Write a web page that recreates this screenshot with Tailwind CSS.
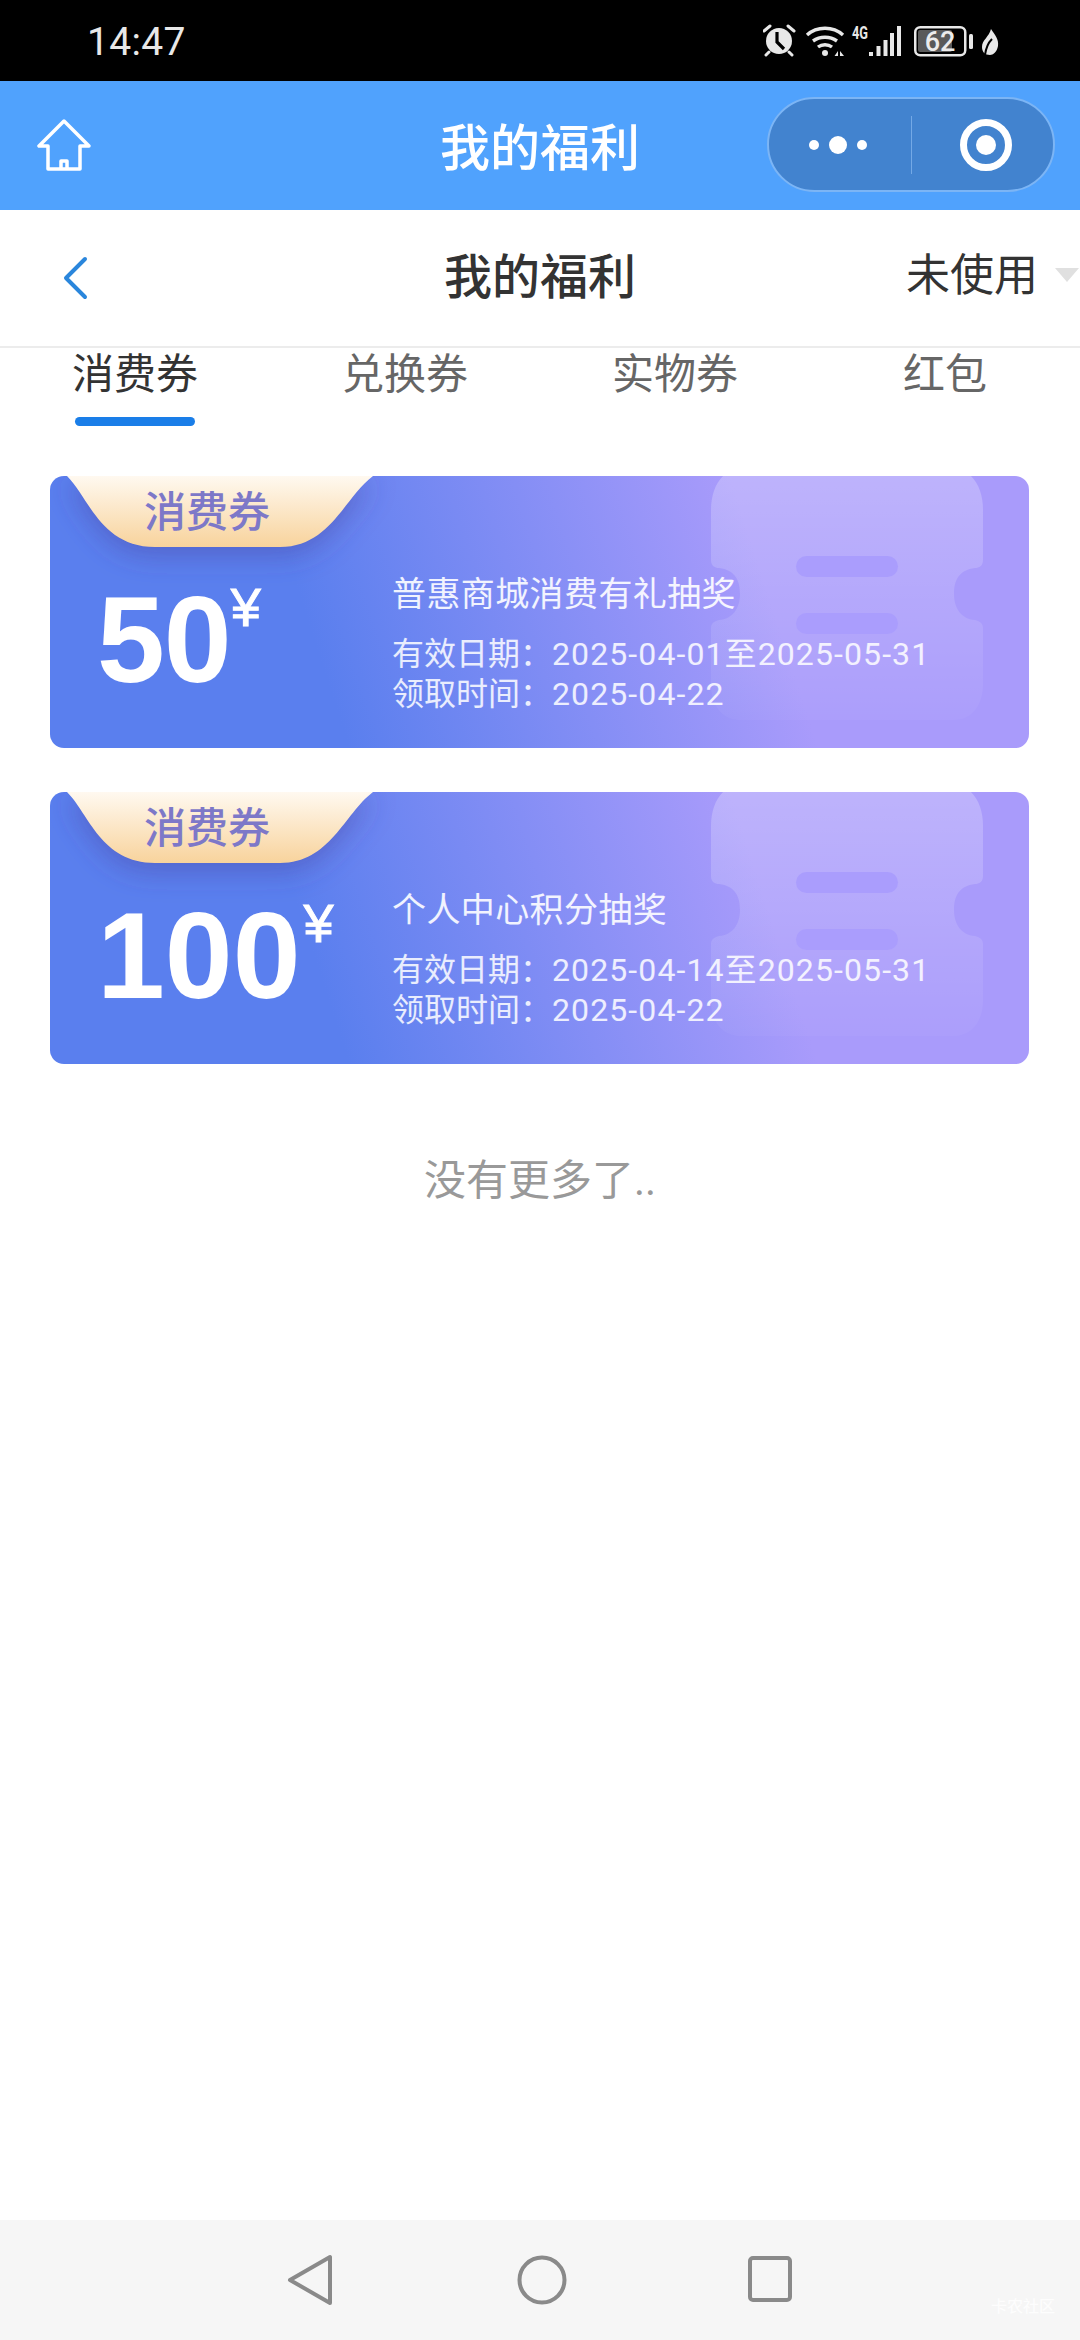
<!DOCTYPE html>
<html lang="zh">
<head>
<meta charset="UTF-8">
<title>我的福利</title>
<script src="https://cdn.jsdelivr.net/npm/@tailwindcss/browser@4"></script>
</head>
<body class="bg-white font-['Roboto','Noto_Sans_CJK_SC',sans-serif]">
<div class="flex h-[2340px] w-[1080px] flex-col overflow-hidden">

  <!-- status bar -->
  <div class="flex h-[81px] items-center justify-between bg-black pl-[87px] pr-[81px] text-[#e8e8e8]">
    <span class="mt-[3px] text-[39px] leading-none tracking-[0.3px]">14:47</span>
    <svg width="236" height="40" viewBox="0 0 236 40" fill="none">
      <!-- alarm -->
      <circle cx="16" cy="20" r="13" fill="#e8e8e8"/>
      <path d="M14 11v10l7 7" stroke="#000" stroke-width="3.2"/>
      <path d="M1 10l6-5M31 10l-6-5M6 31l-3 3M26 31l3 3" stroke="#e8e8e8" stroke-width="3" stroke-linecap="round"/>
      <!-- wifi -->
      <path d="M44 14c10-9 26-9 36 0M50 20c7-5 17-5 24 0M55 26c4-3 10-3 14 0" stroke="#e8e8e8" stroke-width="3.4"/>
      <circle cx="62" cy="32" r="3" fill="#e8e8e8"/>
      <path d="M75 35h-3.5l3.500-5zM77 30l4 5h-4z" fill="#e8e8e8"/>
      <!-- 4G and signal -->
      <text x="89" y="18" fill="#e8e8e8" font-size="18" font-weight="700" font-family="Roboto" textLength="16" lengthAdjust="spacingAndGlyphs">4G</text>
      <path d="M106 31h4v4h-4zM113.500 25h4v10h-4zM120.500 19h4v16h-4zM127 12h4v23h-4zM134 5h4v30h-4z" fill="#e8e8e8"/>
      <!-- battery -->
      <rect x="152.250" y="6.250" width="50" height="28" rx="5" stroke="#e8e8e8" stroke-width="2.500"/>
      <rect x="155" y="9" width="34" height="22" rx="2" fill="#5a5a5a"/>
      <text x="177" y="29.500" text-anchor="middle" fill="#ececec" font-size="27" font-weight="500" font-family="Roboto">62</text>
      <rect x="206" y="13" width="4" height="15" rx="1.500" fill="#e8e8e8"/>
      <!-- leaf -->
      <path d="M228 8c4 6 8 10 7 17-1 6-5 9-8 9-5 0-8-3-8-8 0-7 7-10 9-18z" fill="#e8e8e8"/>
      <path d="M222 34c1-8 3-12 7-16" stroke="#000" stroke-width="2"/>
    </svg>
  </div>

  <!-- blue mini program bar -->
  <div class="relative flex h-[129px] items-center justify-center bg-[#50a2fd]">
    <svg class="absolute left-[37px] top-[38px]" width="54" height="52" viewBox="0 0 54 52" fill="none" stroke="#fff" stroke-width="3.5" stroke-linejoin="round">
      <path d="M27 2L2 27h9v23h32V27h9z"/>
      <path d="M24 50v-8h6v8"/>
    </svg>
    <span class="mt-[6px] text-[50px] font-medium leading-none text-white">我的福利</span>
    <div class="absolute left-[767px] top-[16px] flex h-[95px] w-[288px] items-center rounded-full border-2 border-[#7cb5f5] bg-[#4283cf]">
      <div class="flex w-[142px] items-center justify-center gap-[10px] pr-[4px]">
        <span class="size-[10px] rounded-full bg-white"></span>
        <span class="size-[18px] rounded-full bg-white"></span>
        <span class="size-[10px] rounded-full bg-white"></span>
      </div>
      <div class="h-[58px] w-px bg-[#74a9e6]"></div>
      <div class="flex flex-1 items-center justify-center pl-[6px]">
        <div class="flex size-[52px] items-center justify-center rounded-full border-[7px] border-white">
          <span class="size-[20px] rounded-full bg-white"></span>
        </div>
      </div>
    </div>
  </div>

  <!-- page title row -->
  <div class="relative flex h-[138px] items-center justify-center border-b-2 border-[#ececec]">
    <svg class="absolute left-[62px] top-[46px]" width="26" height="44" viewBox="0 0 26 44" fill="none" stroke="#2a86dc" stroke-width="4" stroke-linecap="round" stroke-linejoin="round">
      <path d="M23 3L4 22l19 19"/>
    </svg>
    <span class="text-[48px] font-medium leading-none text-[#333]">我的福利</span>
    <span class="absolute left-[906px] top-[44px] text-[44px] leading-none text-[#333]">未使用</span>
    <span class="absolute left-[1055px] top-[58px] h-0 w-0 border-x-[12px] border-t-[14px] border-x-transparent border-t-[#e0e0e0]"></span>
  </div>

  <!-- tabs -->
  <div class="grid h-[80px] grid-cols-4 text-center text-[42px] leading-none text-[#666]">
    <div class="flex flex-col items-center pt-[6px]">
      <span class="text-[#333]">消费券</span>
      <span class="mt-[21px] h-[9px] w-[120px] rounded-full bg-[#1a7ee8]"></span>
    </div>
    <div class="pt-[6px]">兑换券</div>
    <div class="pt-[6px]">实物券</div>
    <div class="pt-[6px]">红包</div>
  </div>

  <!-- coupons -->
  <div class="mt-[48px] flex flex-col gap-[44px] pl-[50px] pr-[51px]">

    <div class="relative h-[272px] overflow-hidden rounded-[14px] bg-[linear-gradient(72deg,#5a7fee_28%,#a99bfb_72%)]">
      <svg class="absolute left-0 top-0" width="979" height="272" viewBox="0 0 979 272" fill="none">
        <defs>
          <linearGradient id="tab1" x1="0" y1="0" x2="0" y2="1"><stop offset="0" stop-color="#fff9f0"/><stop offset="1" stop-color="#f8d39c"/></linearGradient>
          <linearGradient id="tk1" x1="0" y1="0" x2="0" y2="1"><stop offset="0" stop-color="#fff" stop-opacity=".24"/><stop offset="1" stop-color="#fff" stop-opacity=".03"/></linearGradient>
          <filter id="sh1" x="-30%" y="-30%" width="160%" height="190%"><feGaussianBlur stdDeviation="14"/></filter>
        </defs>
        <path d="M673 0C665 8 661 20 661 34V84c0 6 4 8 8 8 16 2 21 12 21 26s-7 25-21 26c-4 1-8 3-8 8v56c0 20 10 36 30 36h212c20 0 30-16 30-36v-56c0-5-4-7-8-8-14-1-21-12-21-26s5-24 21-26c4 0 8-2 8-8V34C933 20 929 8 921 0z" fill="url(#tk1)"/>
        <rect x="746" y="80" width="102" height="21" rx="10.500" fill="#aa9dfd"/>
        <rect x="746" y="137" width="102" height="21" rx="10.500" fill="#aa9dfd"/>
        <path d="M17 0c22 22 34 71 88 71h125c50 0 64-49 93-71z" fill="#4a3f9e" fill-opacity=".45" filter="url(#sh1)" transform="translate(0 8)"/>
        <path d="M17 0c22 22 34 71 88 71h125c50 0 64-49 93-71z" fill="url(#tab1)"/>
      </svg>
      <span class="absolute left-[94px] top-[16px] text-[42px] font-medium leading-[42px] text-[#7d78c8]">消费券</span>
      <div class="absolute left-[47px] top-[103px] flex items-start font-['Liberation_Sans',sans-serif] text-white">
        <span class="text-[122px] font-bold leading-[122px] tracking-[-1px]">50</span>
        <span class="mt-[1px] text-[54px] leading-none [-webkit-text-stroke:1px_white]">¥</span>
      </div>
      <div class="absolute left-[342px] top-[96px] text-white/85">
        <p class="text-[34px] leading-[44px] tracking-[0.4px] text-white/90">普惠商城消费有礼抽奖</p>
        <p class="mt-[18px] text-[32px] leading-[40px]">有效日期：<span class="tracking-[1.1px]">2025-04-01至2025-05-31</span></p>
        <p class="text-[32px] leading-[40px]">领取时间：<span class="tracking-[1.1px]">2025-04-22</span></p>
      </div>
    </div>

    <div class="relative h-[272px] overflow-hidden rounded-[14px] bg-[linear-gradient(72deg,#5a7fee_28%,#a99bfb_72%)]">
      <svg class="absolute left-0 top-0" width="979" height="272" viewBox="0 0 979 272" fill="none">
        <defs>
          <linearGradient id="tab2" x1="0" y1="0" x2="0" y2="1"><stop offset="0" stop-color="#fff9f0"/><stop offset="1" stop-color="#f8d39c"/></linearGradient>
          <linearGradient id="tk2" x1="0" y1="0" x2="0" y2="1"><stop offset="0" stop-color="#fff" stop-opacity=".24"/><stop offset="1" stop-color="#fff" stop-opacity=".03"/></linearGradient>
          <filter id="sh2" x="-30%" y="-30%" width="160%" height="190%"><feGaussianBlur stdDeviation="14"/></filter>
        </defs>
        <path d="M673 0C665 8 661 20 661 34V84c0 6 4 8 8 8 16 2 21 12 21 26s-7 25-21 26c-4 1-8 3-8 8v56c0 20 10 36 30 36h212c20 0 30-16 30-36v-56c0-5-4-7-8-8-14-1-21-12-21-26s5-24 21-26c4 0 8-2 8-8V34C933 20 929 8 921 0z" fill="url(#tk2)"/>
        <rect x="746" y="80" width="102" height="21" rx="10.500" fill="#aa9dfd"/>
        <rect x="746" y="137" width="102" height="21" rx="10.500" fill="#aa9dfd"/>
        <path d="M17 0c22 22 34 71 88 71h125c50 0 64-49 93-71z" fill="#4a3f9e" fill-opacity=".45" filter="url(#sh2)" transform="translate(0 8)"/>
        <path d="M17 0c22 22 34 71 88 71h125c50 0 64-49 93-71z" fill="url(#tab2)"/>
      </svg>
      <span class="absolute left-[94px] top-[16px] text-[42px] font-medium leading-[42px] text-[#7d78c8]">消费券</span>
      <div class="absolute left-[47px] top-[103px] flex items-start font-['Liberation_Sans',sans-serif] text-white">
        <span class="text-[122px] font-bold leading-[122px]">100</span>
        <span class="ml-[3px] mt-[1px] text-[54px] leading-none [-webkit-text-stroke:1px_white]">¥</span>
      </div>
      <div class="absolute left-[342px] top-[96px] text-white/85">
        <p class="text-[34px] leading-[44px] tracking-[0.4px] text-white/90">个人中心积分抽奖</p>
        <p class="mt-[18px] text-[32px] leading-[40px]">有效日期：<span class="tracking-[1.1px]">2025-04-14至2025-05-31</span></p>
        <p class="text-[32px] leading-[40px]">领取时间：<span class="tracking-[1.1px]">2025-04-22</span></p>
      </div>
    </div>
  </div>

  <p class="mt-[94px] text-center text-[42px] leading-[46px] text-[#999]">没有更多了..</p>

  <!-- android nav -->
  <div class="relative mt-auto flex h-[120px] items-center justify-center bg-[#f6f6f6]">
    <svg class="ml-[3px]" width="510" height="52" viewBox="0 0 510 52" fill="none" stroke="#8a8a8a" stroke-width="4" stroke-linejoin="round">
      <path d="M3 26L43 3v46z" />
      <circle cx="255" cy="26" r="22.500"/>
      <rect x="463" y="4" width="40" height="42" rx="3"/>
    </svg>
    <span class="absolute left-[991px] top-[79px] text-[16px] leading-none text-white/80">卡农社区</span>
  </div>
</div>
</body>
</html>
